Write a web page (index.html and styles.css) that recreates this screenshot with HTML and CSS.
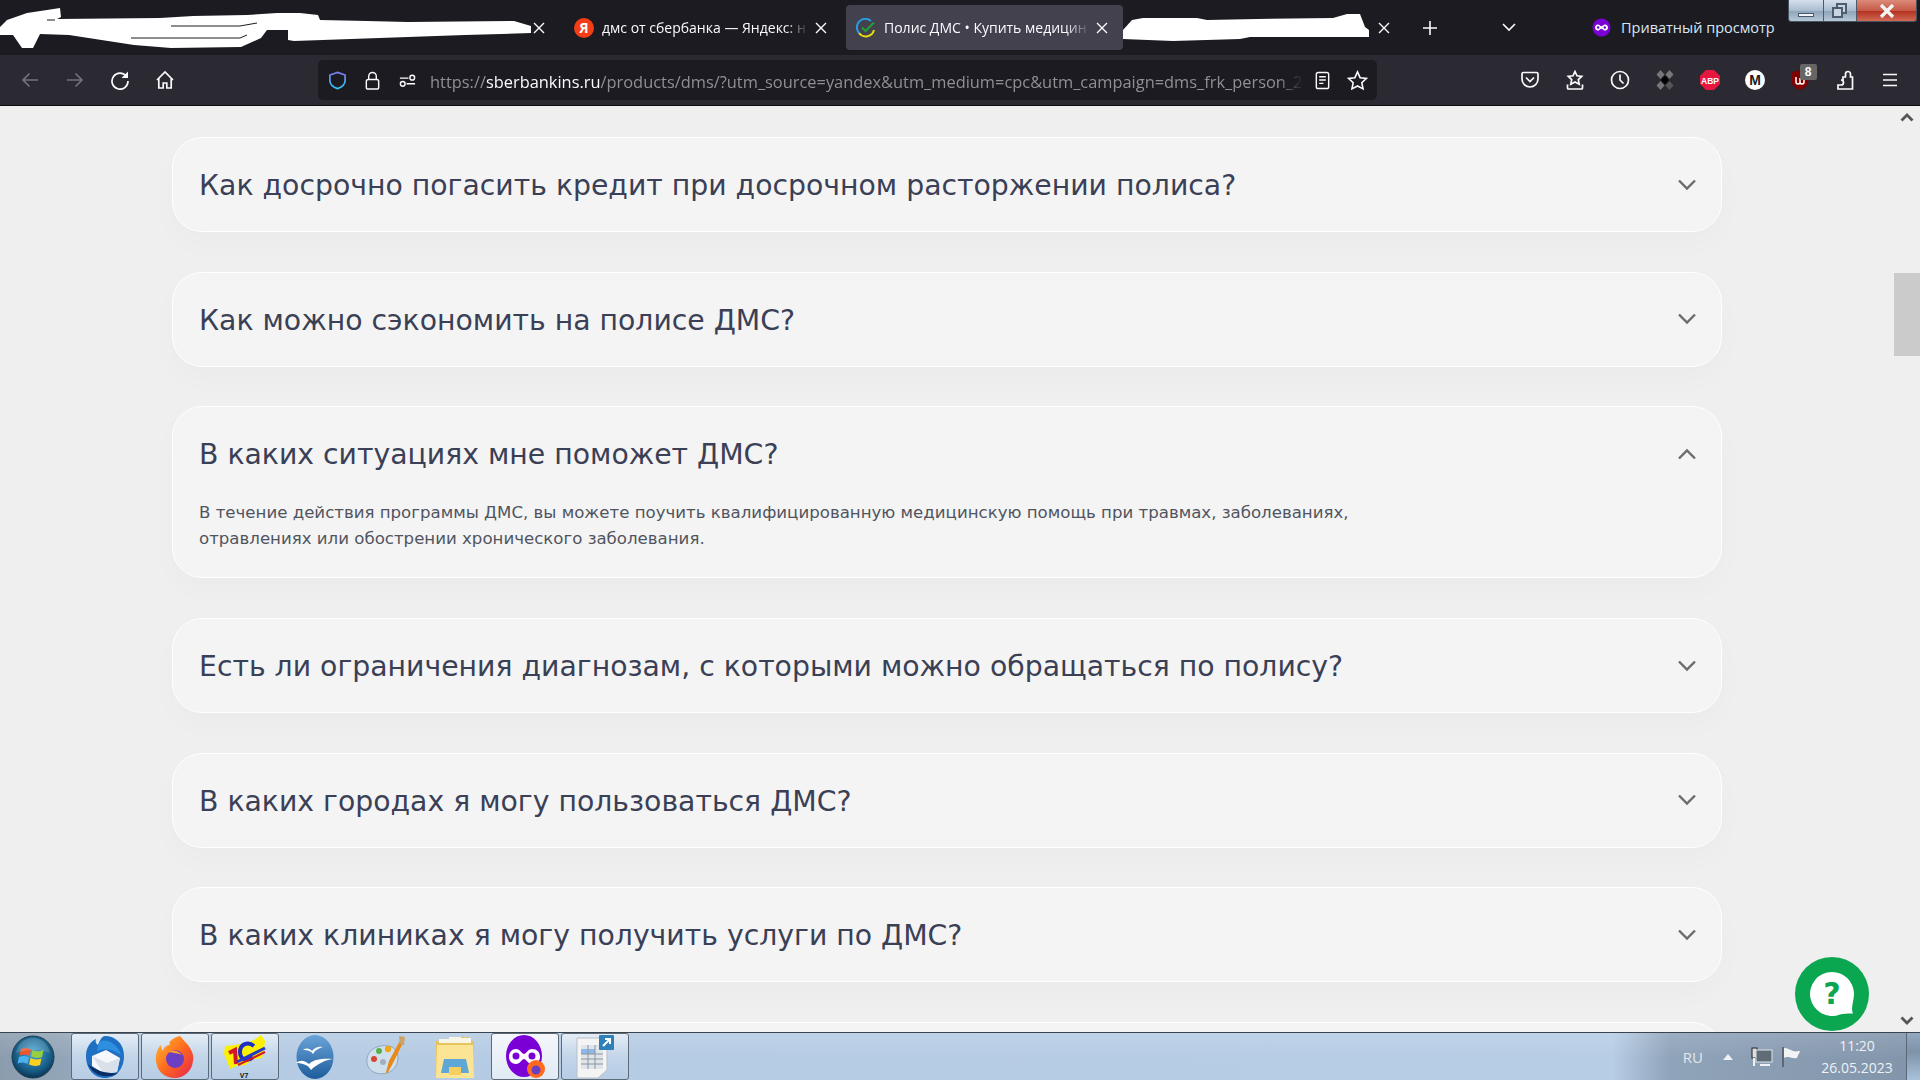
FILE: index.html
```html
<!DOCTYPE html>
<html lang="ru">
<head>
<meta charset="utf-8">
<title>Полис ДМС</title>
<link rel="stylesheet" href="styles.css">
</head>
<body>
<div class="window">
  <header class="tabstrip">
    <div class="tab"><span class="tab-title"></span><svg class="tab-x" viewBox="0 0 16 16"><path d="M3 3l10 10M13 3L3 13"/></svg></div>
    <div class="tab tab-nudge"><span class="tab-title"></span><svg class="tab-x" viewBox="0 0 16 16"><path d="M3 3l10 10M13 3L3 13"/></svg></div>
    <div class="tab tab-nudge">
      <span class="fav-ya">Я</span>
      <span class="tab-title">дмс от сбербанка — Яндекс: н</span>
      <svg class="tab-x" viewBox="0 0 16 16"><path d="M3 3l10 10M13 3L3 13"/></svg>
    </div>
    <div class="tab tab-active">
      <svg class="fav" viewBox="0 0 20 20"><path d="M3 15A8.500 8.500 0 0 1 15 3" fill="none" stroke="#2a9de8" stroke-width="2"/><path d="M3 15A8.500 8.500 0 0 0 18 12" fill="none" stroke="#e8dc10" stroke-width="2"/><path d="M6 9.500l3.500 3.500L18 4.500" fill="none" stroke="#21a038" stroke-width="2"/></svg>
      <span class="tab-title">Полис ДМС • Купить медицин</span>
      <svg class="tab-x" viewBox="0 0 16 16"><path d="M3 3l10 10M13 3L3 13"/></svg>
    </div>
    <div class="tab"><span class="tab-title"></span><svg class="tab-x" viewBox="0 0 16 16"><path d="M3 3l10 10M13 3L3 13"/></svg></div>
    <svg class="strip-plus" viewBox="0 0 16 16"><path d="M8 1v14M1 8h14"/></svg>
    <svg class="strip-chev" viewBox="0 0 16 16"><path d="M2 5l6 6 6-6"/></svg>
    <div class="private">
      <svg class="private-icon" viewBox="0 0 20 20"><circle cx="10" cy="10" r="9.500" fill="#7a00d6"/><path d="M6.200 6.800c1.800 0 2.600 2 3.800 2s2-2 3.800-2c1.900 0 3 1.400 3 3.300s-1.200 3.200-3 3.200c-1.800 0-2.600-2-3.800-2s-2 2-3.800 2c-1.800 0-3-1.300-3-3.200s1.100-3.300 3-3.300z" fill="#fff"/><circle cx="6.500" cy="10" r="1.300" fill="#7a00d6"/><circle cx="13.500" cy="10" r="1.300" fill="#7a00d6"/></svg>
      <span>Приватный просмотр</span>
    </div>
    <div class="wincontrols">
      <div class="win win-min"><span class="win-min-bar"></span></div>
      <div class="win win-max"><span class="win-max-a"></span><span class="win-max-b"></span></div>
      <div class="win win-close"><svg viewBox="0 0 20 14"><path d="M4 1l12 12M16 1L4 13"/></svg></div>
    </div>
  </header>

  <nav class="navbar">
    <div class="nav-group">
      <button class="nbtn dim"><svg viewBox="0 0 20 20"><path d="M18 10H3M9.500 3.500L3 10l6.500 6.500"/></svg></button>
      <button class="nbtn dim"><svg viewBox="0 0 20 20"><path d="M2 10h15M10.500 3.500L17 10l-6.500 6.500"/></svg></button>
      <button class="nbtn"><svg viewBox="0 0 20 20"><path d="M16.500 6.500A8 8 0 1 0 18 11"/><path class="solid" d="M18 1.500v6.500h-6.500z"/></svg></button>
      <button class="nbtn"><svg viewBox="0 0 20 20"><path d="M2 10l8-8 8 8M3.800 8.500V18h4.400v-5h3.600v5h4.400V8.500"/></svg></button>
    </div>
    <div class="urlbar">
      <span class="ubtn"><svg viewBox="0 0 20 20"><defs><linearGradient id="sh" x1="0" y1="0" x2="0" y2="1"><stop offset="0" stop-color="#7b7cf0"/><stop offset="1" stop-color="#2fc4f5"/></linearGradient></defs><path d="M10 1.500l8 2.700V10c0 4-3.500 7-8 8.500C5.500 17 2 14 2 10V4.200z" fill="none" stroke="url(#sh)" stroke-width="1.800"/></svg></span>
      <span class="ubtn"><svg viewBox="0 0 20 20"><rect x="3.500" y="9" width="13" height="10" rx="2"/><path d="M6 9V5.500a4 4 0 0 1 8 0V9"/></svg></span>
      <span class="ubtn"><svg viewBox="0 0 20 20"><path d="M2 7.500h9M9 13.500h9"/><circle cx="15" cy="7" r="2.500"/><circle cx="5" cy="13.500" r="2.500"/></svg></span>
      <div class="url"><span>https://</span><b>sberbankins.ru</b><span>/products/dms/?utm_source=yandex&amp;utm_medium=cpc&amp;utm_campaign=dms_frk_person_2</span></div>
      <span class="ubtn"><svg viewBox="0 0 20 20"><rect x="3.500" y="1.500" width="13" height="17" rx="2"/><path d="M6.500 6h7M6.500 9.500h7M6.500 13h4.500"/></svg></span>
      <span class="ubtn ubtn-big"><svg viewBox="0 0 20 20"><path d="M10 1.800l2.500 5.500 6 .7-4.400 4.100 1.200 5.900L10 15.200l-5.300 2.800 1.200-5.900L1.500 8l6-.7z"/></svg></span>
    </div>
    <div class="nav-group nav-right">
      <button class="nbtn"><svg viewBox="0 0 20 20"><path d="M3.500 2.500h13a1.500 1.500 0 0 1 1.500 1.500v5a8 8 0 0 1-16 0V4a1.500 1.500 0 0 1 1.500-1.500z"/><path d="M6 7.500l4 4 4-4"/></svg></button>
      <button class="nbtn"><svg viewBox="0 0 20 20"><path d="M10 1.500l2 4.300 4.700.6-3.400 3.200.9 4.600L10 12l-4.200 2.200.9-4.600-3.400-3.200 4.700-.6z"/><path d="M2.500 14.500V18a1 1 0 0 0 1 1h13a1 1 0 0 0 1-1v-3.500"/></svg></button>
      <button class="nbtn"><svg viewBox="0 0 20 20"><circle cx="10" cy="10" r="8.500"/><path d="M10 4.500V10l3.500 3.500"/></svg></button>
      <button class="nbtn"><svg viewBox="0 0 20 20" class="raw"><path d="M5.500 0L9.500 4.500 5.500 9 1.500 4.500z" fill="#777"/><path d="M14.500 0l4 4.500-4 4.500-4-4.500z" fill="#777"/><path d="M5.500 11l4 4.500-4 4.500-4-4.500z" fill="#777"/><path d="M14.500 11l4 4.500-4 4.500-4-4.500z" fill="#555"/><path d="M10 5.500l4 4.500-4 4.500L6 10z" fill="#000"/></svg></button>
      <button class="nbtn"><svg viewBox="0 0 20 20" class="raw"><path d="M6 0h8l6 6v8l-6 6H6l-6-6V6z" fill="#e8173f"/><text x="10" y="13.500" class="abp-text">ABP</text></svg></button>
      <button class="nbtn"><svg viewBox="0 0 20 20" class="raw"><circle cx="10" cy="10" r="10" fill="#fff"/><text x="10" y="15" class="m-text">M</text></svg></button>
      <button class="nbtn ublock"><svg viewBox="0 0 20 20" class="raw"><path d="M10 0l8.500 2.500V10c0 5-4 8.500-8.500 10C5.500 18.500 1.500 15 1.500 10V2.500z" fill="#800000"/><path d="M6 7v5a2 2 0 0 0 4 0V8v4a2 2 0 0 0 4 0V7" fill="none" stroke="#fff" stroke-width="1.500"/></svg><span class="badge">8</span></button>
      <button class="nbtn"><svg viewBox="0 0 20 20"><path d="M8 10V7h2.500V4a2.500 2.500 0 0 1 5 0v3h2v12H3v-4h3a2.500 2.500 0 0 0 0-5z"/></svg></button>
      <button class="nbtn"><svg viewBox="0 0 20 20"><path d="M3 4.500h14M3 10h14M3 15.500h14"/></svg></button>
    </div>
  </nav>

  <div class="viewport">
    <main class="page">
      <section class="card"><h3>Как досрочно погасить кредит при досрочном расторжении полиса?</h3><svg class="chev" viewBox="0 0 18 12"><path d="M1 1.500l8 8 8-8"/></svg></section>
      <section class="card"><h3>Как можно сэкономить на полисе ДМС?</h3><svg class="chev" viewBox="0 0 18 12"><path d="M1 1.500l8 8 8-8"/></svg></section>
      <section class="card card-open"><h3>В каких ситуациях мне поможет ДМС?</h3><svg class="chev" viewBox="0 0 18 12"><path d="M1 10.500l8-8 8 8"/></svg>
        <p>В течение действия программы ДМС, вы можете поучить квалифицированную медицинскую помощь при травмах, заболеваниях, отравлениях или обострении хронического заболевания.</p></section>
      <section class="card"><h3>Есть ли ограничения диагнозам, с которыми можно обращаться по полису?</h3><svg class="chev" viewBox="0 0 18 12"><path d="M1 1.500l8 8 8-8"/></svg></section>
      <section class="card"><h3>В каких городах я могу пользоваться ДМС?</h3><svg class="chev" viewBox="0 0 18 12"><path d="M1 1.500l8 8 8-8"/></svg></section>
      <section class="card"><h3>В каких клиниках я могу получить услуги по ДМС?</h3><svg class="chev" viewBox="0 0 18 12"><path d="M1 1.500l8 8 8-8"/></svg></section>
      <section class="card"></section>
    </main>
    <aside class="scrollbar">
      <svg class="sb-arrow" viewBox="0 0 14 9"><path d="M1.500 7.500L7 2l5.500 5.500"/></svg>
      <div class="sb-thumb"></div>
      <svg class="sb-arrow sb-down" viewBox="0 0 14 9"><path d="M1.500 1.500L7 7l5.500-5.500"/></svg>
    </aside>
    <div class="chat">
      <svg viewBox="0 0 46 46"><path d="M23 1a22 22 0 1 0 8 42.500c3-1 7-1 13-1-1.500-3-1-6 0-12 .7-3 1-6 1-8.500A22 22 0 0 0 23 1z" fill="#fff"/><text x="23" y="33" class="q-text">?</text></svg>
    </div>
  </div>

  <footer class="taskbar">
    <div class="orb-slot">
      <svg viewBox="0 0 44 44" class="orb"><defs><radialGradient id="og" cx=".5" cy=".4" r=".65"><stop offset="0" stop-color="#4aa8d8"/><stop offset=".7" stop-color="#14577f"/><stop offset="1" stop-color="#07273f"/></radialGradient></defs><circle cx="22" cy="22" r="21" fill="url(#og)" stroke="#1d3c52"/><path d="M10 14c4-2 7-1 10 .5L18.500 21c-3-1.500-6-2-10-.5z" fill="#f0562c"/><path d="M21.500 15c3 1.500 7 2 11 0L31 22c-4 1.500-7 1-11-.5z" fill="#96d03f"/><path d="M8 22c4-1.500 7-1 10 .5L16.500 29c-3-1.500-6-2-10-.5z" fill="#4ab2ee"/><path d="M19.500 23c3 1.500 7 2 11 .5L29 30c-4 1.500-7 1-11-.5z" fill="#fdd01e"/><path class="orb-gloss" d="M5 18C7 8 14 3 22 3s15 5 17 15c-10-4-24-4-34 0z"/></svg>
    </div>
    <div class="tb-item tb-btn">
      <svg viewBox="0 0 40 44"><path d="M20 1c10 0 19 7 19 20S31 43 20 43C9 43 1 34 1 21 1 12 6 6 11 4c-1 3 0 5 2 6 2-5 4-9 7-9z" fill="#1f6fc2"/><path d="M16 6c8-2 17 4 20 14-8-6-16-7-24-4 0-4 2-8 4-10z" fill="#2e8fe0"/><path d="M7 21l14-6 14 8-3 14-13 2-12-8z" fill="#f5f7fa"/><path d="M7 21l15 7 13-5-3 14-13 2z" fill="#d9e0ea"/><path d="M3 29c4 9 12 13 21 12 4 0 6-1 9-3-10 1-22-2-30-9z" fill="#0a2f66"/></svg>
    </div>
    <div class="tb-item tb-btn">
      <svg viewBox="0 0 40 44"><defs><linearGradient id="ff" x1="0" y1="0" x2="1" y2="1"><stop offset="0" stop-color="#ffbd2e"/><stop offset=".5" stop-color="#ff6a1f"/><stop offset="1" stop-color="#e3224f"/></linearGradient></defs><path d="M25 1c3 4 7 7 10 12 3 5 4 9 3 13-1 10-9 17-18 17C9 43 2 36 1 26c-.5-6 1-12 5-16 0 3 1 5 2 6 1-4 4-6 7-6-2-3 2-7 10-9z" fill="url(#ff)"/><circle cx="20" cy="24" r="9" fill="#6a3fc4"/><path d="M13 17c5-3 11-1 14 3-4-2-9-2-14-3z" fill="#ff9a2a"/></svg>
    </div>
    <div class="tb-item tb-btn">
      <svg viewBox="0 0 44 44" class="logo-1c"><path d="M2 11l10-1 10-2 9-3 7-5 4 6-1 8-2 9-8 1-9 6-9 1-6 3-3-8-3-7z" fill="#fbf000"/><path d="M6 18l6-3 1 14" stroke="#d3172a" stroke-width="4" fill="none"/><path d="M31 11c-6-5-14-2-14 6s8 10 13 5" stroke="#1b2fc4" stroke-width="4" fill="none"/><path d="M14 27l28-14" stroke="#2438c8" stroke-width="3" fill="none"/><path d="M15 30l27-13" stroke="#d3172a" stroke-width="2" fill="none"/><text x="21" y="43" class="v7-text">V7</text></svg>
    </div>
    <div class="tb-item">
      <svg viewBox="0 0 40 44"><defs><linearGradient id="oo" x1="0" y1="0" x2="0" y2="1"><stop offset="0" stop-color="#6aa3d8"/><stop offset="1" stop-color="#1d5d9c"/></linearGradient></defs><ellipse cx="20" cy="22" rx="18.500" ry="22" fill="url(#oo)"/><path d="M8 15c4-3 7-1 9 1 2-2 5-5 11-4-4 1-8 3-10 7-2-3-5-4-10-4z" fill="#fff"/><path d="M1 28c5-4 9-2 13 1 3-3 9-6 24-5-8 1-16 5-22 11-3-5-8-7-15-7z" fill="#fff"/></svg>
    </div>
    <div class="tb-item">
      <svg viewBox="0 0 40 44"><path d="M2 24C3 14 14 9 24 11c9 2 11 12 7 20-4 7-13 9-20 7C5 36 1 31 2 24z" fill="#cfe0ec" stroke="#8fa9bd"/><circle cx="9" cy="24" r="3" fill="#d9432b"/><circle cx="14" cy="16" r="3" fill="#58b04a"/><circle cx="23" cy="14" r="3.200" fill="#f2a71b"/><circle cx="18" cy="27" r="3" fill="#9fb1c0"/><path d="M37 2l2 4-12 24-5 9-1-2 3-11z" fill="#e88a1a"/><path d="M34 1l6 1-1 8-4-1z" fill="#c9a36a"/></svg>
    </div>
    <div class="tb-item">
      <svg viewBox="0 0 40 44"><path d="M1 6h16l2-4h14l4 4h2v34H1z" fill="#e7c35d"/><path d="M4 4h12v4H4zM14 2h12v6H14zM24 3h12v5H24z" fill="#f7f5e6"/><path d="M2 10h36l1 33H1z" fill="#fbe493"/><path d="M9 24h22l3 14H6z" fill="#5fa7d6"/><path d="M14 32h12v8H14z" fill="#f7cf5e"/></svg>
    </div>
    <div class="tb-item tb-btn tb-on">
      <svg viewBox="0 0 40 44"><ellipse cx="19" cy="21" rx="18" ry="21" fill="#7a00d6"/><path d="M11 14c4 0 6 5 8 5s4-5 8-5c5 0 8 3 8 8 0 4-3 7-8 7-4 0-6-5-8-5s-4 5-8 5c-4 0-7-3-7-7 0-5 3-8 7-8z" fill="#fff"/><circle cx="11" cy="21" r="3.500" fill="#7a00d6"/><circle cx="27" cy="21" r="3.500" fill="#7a00d6"/><circle cx="31" cy="34" r="9" fill="#ff6a1f"/><circle cx="31" cy="35" r="4.500" fill="#6a3fc4"/></svg>
    </div>
    <div class="tb-item tb-btn">
      <svg viewBox="0 0 40 44" class="raw"><path d="M2 3h30v32l-9 8H2z" fill="#f4f4f4" stroke="#b9bfc6"/><path d="M6 10h22v24H6z" fill="#dfe5ea"/><path d="M6 14h14v5H6z" fill="#8fb8ea"/><path d="M6 19h22M6 24h22M6 29h22M13 10v24M20 10v24" stroke="#8d979f" fill="none"/><rect x="24" y="0" width="15" height="15" rx="1" fill="#2f7fb8"/><path d="M28 11l7-7M30 4h5v5" stroke="#fff" stroke-width="2" fill="none"/></svg>
    </div>
    <div class="tray">
      <span class="tray-lang">RU</span>
      <span class="tray-up"></span>
      <svg class="tray-net" viewBox="0 0 22 20"><rect x="1" y="1" width="5" height="10" fill="#ddd" stroke="#222"/><rect x="5" y="3" width="16" height="12" fill="#5f6c78" stroke="#dfe5ea"/><path d="M3 11v8M9 18h10" stroke="#f2f2f2" stroke-width="2"/></svg>
      <svg class="tray-flag" viewBox="0 0 20 20"><path d="M2 0v20" stroke="#333" stroke-width="1"/><path d="M3 1c4 0 6 2 9 3s4 0 7 0c-1 3-2 4-3 7-4 1-6-1-9-1-2 0-3 0-4 1z" fill="#f2f4f6"/></svg>
      <div class="clock"><span>11:20</span><span>26.05.2023</span></div>
      <div class="showdesk"></div>
    </div>
  </footer>

  <svg class="scribbles" viewBox="0 0 1920 60">
    <path class="scribble" d="M0 27L7 20 27 13 47 10 60 8 61 17 57 19 160 18 193 16 247 15 277 13 300 13 318 15 320 20 367 21 408 22 514 21 531 26 531 33 465 35 294 41 288 40 288 30 267 30 261 38 241 47 171 48 134 45 69 35 40 34 33 48 22 48 13 35 0 35z"/>
    <path class="slit" d="M47 20H55M171 26H240L257 23M131 38H240L247 35"/>
    <path class="scribble" d="M1123 30L1132 20 1143 18 1197 18 1207 20 1257 19 1333 18 1347 14 1360 14 1365 27 1369 30 1369 37 1250 37 1240 39 1173 41 1123 39z"/>
  </svg>
</div>
</body>
</html>
```
FILE: styles.css
```css
* { box-sizing: border-box; }
html, body { margin: 0; height: 100%; overflow: hidden; }
body { font-family: "Open Sans", "Noto Sans", sans-serif; }
.window { position: relative; width: 1920px; height: 1080px; display: flex; flex-direction: column; background: #efefef; }

/* tab strip */
.tabstrip { height: 55px; flex: none; display: flex; align-items: flex-start; background: #1c1b22; gap: 5px; color: #fbfbfe; }
.tab { width: 277px; height: 45px; margin-top: 5px; flex: none; display: flex; align-items: center; padding: 0 13px 0 10px; border-radius: 4px; font-size: 14px; }
.tab-nudge { padding-right: 12px; }
.tab-active { background: #42414d; }
.fav { width: 20px; height: 20px; flex: none; margin-right: 8px; }
.fav-ya { width: 20px; height: 20px; flex: none; margin-right: 8px; border-radius: 50%; background: #f33d16; color: #fff; font-size: 14px; font-weight: 700; text-align: center; line-height: 20px; }
.tab-title { flex: 1; min-width: 0; white-space: nowrap; overflow: hidden; -webkit-mask-image: linear-gradient(to right, #000 88%, transparent 100%); mask-image: linear-gradient(to right, #000 88%, transparent 100%); }
.tab-x { width: 16px; height: 16px; flex: none; margin-left: 4px; fill: none; stroke: #fbfbfe; stroke-width: 1.4; }
.strip-plus { width: 16px; height: 16px; flex: none; margin: 20px 12px 0 12px; fill: none; stroke: #fbfbfe; stroke-width: 1.6; }
.strip-chev { width: 16px; height: 16px; flex: none; margin: 19px 0 0 46px; fill: none; stroke: #fbfbfe; stroke-width: 1.6; }
.private { display: flex; align-items: center; gap: 10px; margin: 17px 0 0 70px; font-size: 14.500px; color: #d8e6f5; white-space: nowrap; }
.private-icon { width: 19px; height: 21px; flex: none; }
.wincontrols { margin-left: auto; margin-right: 3px; display: flex; flex: none; height: 22px; border: 1px solid #49535f; border-top: 0; border-radius: 0 0 3px 3px; overflow: hidden; }
.win { height: 100%; display: flex; align-items: center; justify-content: center; position: relative; background: linear-gradient(#d5e0ec, #aabdd0 50%, #8ea4b8 52%, #b6c8d8); border-right: 1px solid #4e5a66; }
.win-min { width: 35px; }
.win-max { width: 33px; }
.win-close { width: 59px; border-right: 0; background: linear-gradient(#dc8a7a, #c65a48 50%, #b4301f 52%, #d06a55); }
.win-close svg { width: 20px; height: 14px; fill: none; stroke: #f3f3f3; stroke-width: 3.400; }
.win-min-bar { width: 16px; height: 4px; background: #f2f5f8; border: 1px solid #49576a; margin-top: 8px; }
.win-max-a, .win-max-b { position: absolute; width: 11px; height: 11px; border: 2px solid #4e5d6e; background: #c9d6e2; }
.win-max-a { left: 12px; top: 3px; }
.win-max-b { left: 8px; top: 7px; }

/* nav bar */
.navbar { height: 51px; flex: none; display: flex; align-items: flex-start; padding: 0 0 0 7.500px; background: #2b2a33; border-bottom: 1px solid #0c0c0d; }
.nav-group { display: flex; height: 50px; align-items: center; }
.nav-right { margin-left: 130.500px; }
.nbtn { position: relative; width: 45px; height: 45px; flex: none; padding: 0; border: 0; background: none; display: flex; align-items: center; justify-content: center; }
.nbtn svg { width: 20px; height: 20px; fill: none; stroke: #fbfbfe; stroke-width: 1.700; }
.nbtn svg.raw { stroke: none; }
.nbtn .solid { fill: #fbfbfe; stroke: none; }
.dim svg { stroke: #74737b; }
.abp-text { font: 700 8.500px "Liberation Sans", sans-serif; fill: #fff; text-anchor: middle; }
.m-text { font: 700 14px "Liberation Sans", sans-serif; fill: #1c1b22; text-anchor: middle; }
.q-text { font: 700 30px "DejaVu Sans", sans-serif; fill: #0aa650; text-anchor: middle; }
.v7-text { font: 700 7px "Liberation Sans", sans-serif; fill: #111; text-anchor: middle; }
.badge { position: absolute; left: 22px; top: 6px; width: 17px; height: 16px; background: #666; border-radius: 2px; color: #fff; font: 700 12px/16px "Liberation Sans", sans-serif; text-align: center; }
.urlbar { width: 1059px; height: 40px; margin-top: 5px; margin-left: 130.500px; flex: none; display: flex; align-items: center; padding: 0 2px; border-radius: 5px; background: #1c1b22; }
.ubtn { width: 35px; height: 35px; flex: none; display: flex; align-items: center; justify-content: center; }
.ubtn svg { width: 19px; height: 19px; fill: none; stroke: #fbfbfe; stroke-width: 1.500; }
.ubtn-big svg { width: 21px; height: 21px; }
.url { flex: 1; min-width: 0; margin: 2px 1px 0 5px; font-size: 16.400px; color: #8f8f94; white-space: nowrap; overflow: hidden; -webkit-mask-image: linear-gradient(to right, #000 97%, transparent 100%); mask-image: linear-gradient(to right, #000 97%, transparent 100%); }
.url b { font-weight: 400; color: #fbfbfe; }

/* page */
.viewport { flex: 1; min-height: 0; position: relative; display: flex; overflow: hidden; background: #efefef; }
.page { flex: 1; min-width: 0; padding: 31px 172px 0; display: flex; flex-direction: column; gap: 39.700px; }
.card { position: relative; flex: none; min-height: 95px; padding: 0 26px; border: 1px solid #fff; border-radius: 30px; background: #f4f4f4; box-shadow: 0 12px 30px rgba(0, 0, 0, .02); }
.card h3 { margin: 0; height: 93px; padding-top: 2px; display: flex; align-items: center; font: 400 28.300px "DejaVu Sans", sans-serif; color: #3a4055; }
.card p { margin: 0; padding-bottom: 25px; max-width: 1160px; font: 400 16.600px/26px "DejaVu Sans", sans-serif; color: #50545f; }
.chev { position: absolute; right: 25.500px; top: 40.500px; width: 18px; height: 12px; fill: none; stroke: #6b6b6b; stroke-width: 2.400; }
.scrollbar { width: 26px; flex: none; display: flex; flex-direction: column; align-items: center; }
.sb-arrow { width: 14px; height: 9px; margin-top: 7px; margin-left: -1px; flex: none; fill: none; stroke: #555; stroke-width: 2.800; }
.sb-thumb { width: 26px; height: 83px; margin-top: 151px; flex: none; background: #cbcbcb; }
.sb-down { margin-top: auto; margin-bottom: 7px; }
.chat { position: absolute; left: 1795px; top: 851px; width: 74px; height: 74px; border-radius: 50%; background: #0aa650; display: flex; align-items: center; justify-content: center; }
.chat svg { width: 46px; height: 46px; }

/* taskbar */
.taskbar { height: 48px; flex: none; display: flex; align-items: center; border-top: 1px solid #39444f; background: linear-gradient(rgba(255, 255, 255, .12), rgba(255, 255, 255, 0) 55%), linear-gradient(to right, #8b9cad 0, #93a6b9 3.500%, #b5cbe3 7%, #b7cde5 84%, #8fa3b9 87%, #8194aa 100%); }
.orb-slot { width: 71px; height: 100%; flex: none; display: flex; align-items: center; justify-content: center; padding-right: 5px; }
.orb { width: 44px; height: 44px; }
.orb-gloss { fill: #fff; opacity: .16; }
.tb-item { width: 68px; height: 47px; margin-right: 2px; flex: none; display: flex; align-items: center; justify-content: center; border-radius: 3px; }
.tb-item svg { width: 40px; height: 44px; }
.tb-item svg.logo-1c { width: 44px; height: 44px; }
.tb-btn { border: 1px solid #5d6b78; background: linear-gradient(#e4edf6, #c3d5e8 50%, #b7cde5); }
.tb-on { background: linear-gradient(#f4f7fb, #e1eaf4); }
.tray { margin-left: auto; height: 100%; display: flex; align-items: center; color: #eef2f6; font-size: 14px; }
.tray-lang { margin-right: 20px; font-size: 15px; color: #e3e8ee; }
.tray-up { width: 0; height: 0; margin-right: 18px; border: 5px solid transparent; border-top: 0; border-bottom: 6px solid #eef2f6; }
.tray-net { width: 22px; height: 20px; margin-right: 8px; }
.tray-flag { width: 20px; height: 20px; margin-right: 9px; }
.clock { width: 94px; display: flex; flex-direction: column; align-items: center; line-height: 21.500px; margin-right: 2px; }
.showdesk { width: 14px; height: 100%; border-left: 1px solid #59697a; background: linear-gradient(#93a9c0, #7e92a8 40%, #a9c2dc); }

/* redaction marks painted over the tab strip */
.scribbles { position: absolute; left: 0; top: 0; width: 1920px; height: 60px; pointer-events: none; }
.scribble { fill: #fff; }
.slit { fill: none; stroke: #1c1b22; stroke-width: 1; }
```
